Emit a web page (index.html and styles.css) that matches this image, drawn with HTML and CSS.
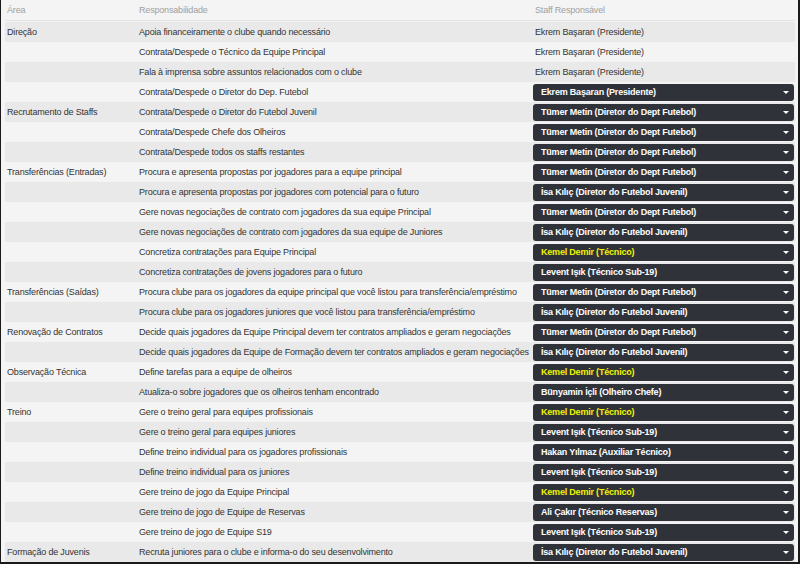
FILE: index.html
```html
<!DOCTYPE html>
<html>
<head>
<meta charset="utf-8">
<link rel="stylesheet" href="styles.css">
</head>
<body>
<div class="frame">
  <div class="table">
    <div class="row head"><div class="c1">Área</div><div class="c2">Responsabilidade</div><div class="c3">Staff Responsável</div></div>
    <div class="row"><div class="c1">Direção</div><div class="c2">Apoia financeiramente o clube quando necessário</div><div class="c3 plain">Ekrem Başaran (Presidente)</div></div>
    <div class="row"><div class="c1"></div><div class="c2">Contrata/Despede o Técnico da Equipe Principal</div><div class="c3 plain">Ekrem Başaran (Presidente)</div></div>
    <div class="row"><div class="c1"></div><div class="c2">Fala à imprensa sobre assuntos relacionados com o clube</div><div class="c3 plain">Ekrem Başaran (Presidente)</div></div>
    <div class="row"><div class="c1"></div><div class="c2">Contrata/Despede o Diretor do Dep. Futebol</div><div class="c3"><div class="sel">Ekrem Başaran (Presidente)</div></div></div>
    <div class="row"><div class="c1">Recrutamento de Staffs</div><div class="c2">Contrata/Despede o Diretor do Futebol Juvenil</div><div class="c3"><div class="sel">Tümer Metin (Diretor do Dept Futebol)</div></div></div>
    <div class="row"><div class="c1"></div><div class="c2">Contrata/Despede Chefe dos Olheiros</div><div class="c3"><div class="sel">Tümer Metin (Diretor do Dept Futebol)</div></div></div>
    <div class="row"><div class="c1"></div><div class="c2">Contrata/Despede todos os staffs restantes</div><div class="c3"><div class="sel">Tümer Metin (Diretor do Dept Futebol)</div></div></div>
    <div class="row"><div class="c1">Transferências (Entradas)</div><div class="c2">Procura e apresenta propostas por jogadores para a equipe principal</div><div class="c3"><div class="sel">Tümer Metin (Diretor do Dept Futebol)</div></div></div>
    <div class="row"><div class="c1"></div><div class="c2">Procura e apresenta propostas por jogadores com potencial para o futuro</div><div class="c3"><div class="sel">İsa Kılıç (Diretor do Futebol Juvenil)</div></div></div>
    <div class="row"><div class="c1"></div><div class="c2">Gere novas negociações de contrato com jogadores da sua equipe Principal</div><div class="c3"><div class="sel">Tümer Metin (Diretor do Dept Futebol)</div></div></div>
    <div class="row"><div class="c1"></div><div class="c2">Gere novas negociações de contrato com jogadores da sua equipe de Juniores</div><div class="c3"><div class="sel">İsa Kılıç (Diretor do Futebol Juvenil)</div></div></div>
    <div class="row"><div class="c1"></div><div class="c2">Concretiza contratações para Equipe Principal</div><div class="c3"><div class="sel hl">Kemel Demir (Técnico)</div></div></div>
    <div class="row"><div class="c1"></div><div class="c2">Concretiza contratações de jovens jogadores para o futuro</div><div class="c3"><div class="sel">Levent Işık (Técnico Sub-19)</div></div></div>
    <div class="row"><div class="c1">Transferências (Saídas)</div><div class="c2">Procura clube para os jogadores da equipe principal que você listou para transferência/empréstimo</div><div class="c3"><div class="sel">Tümer Metin (Diretor do Dept Futebol)</div></div></div>
    <div class="row"><div class="c1"></div><div class="c2">Procura clube para os jogadores juniores que você listou para transferência/empréstimo</div><div class="c3"><div class="sel">İsa Kılıç (Diretor do Futebol Juvenil)</div></div></div>
    <div class="row"><div class="c1">Renovação de Contratos</div><div class="c2">Decide quais jogadores da Equipe Principal devem ter contratos ampliados e geram negociações</div><div class="c3"><div class="sel">Tümer Metin (Diretor do Dept Futebol)</div></div></div>
    <div class="row"><div class="c1"></div><div class="c2">Decide quais jogadores da Equipe de Formação devem ter contratos ampliados e geram negociações</div><div class="c3"><div class="sel">İsa Kılıç (Diretor do Futebol Juvenil)</div></div></div>
    <div class="row"><div class="c1">Observação Técnica</div><div class="c2">Define tarefas para a equipe de olheiros</div><div class="c3"><div class="sel hl">Kemel Demir (Técnico)</div></div></div>
    <div class="row"><div class="c1"></div><div class="c2">Atualiza-o sobre jogadores que os olheiros tenham encontrado</div><div class="c3"><div class="sel">Bünyamin İçli (Olheiro Chefe)</div></div></div>
    <div class="row"><div class="c1">Treino</div><div class="c2">Gere o treino geral para equipes profissionais</div><div class="c3"><div class="sel hl">Kemel Demir (Técnico)</div></div></div>
    <div class="row"><div class="c1"></div><div class="c2">Gere o treino geral para equipes juniores</div><div class="c3"><div class="sel">Levent Işık (Técnico Sub-19)</div></div></div>
    <div class="row"><div class="c1"></div><div class="c2">Define treino individual para os jogadores profissionais</div><div class="c3"><div class="sel">Hakan Yılmaz (Auxiliar Técnico)</div></div></div>
    <div class="row"><div class="c1"></div><div class="c2">Define treino individual para os juniores</div><div class="c3"><div class="sel">Levent Işık (Técnico Sub-19)</div></div></div>
    <div class="row"><div class="c1"></div><div class="c2">Gere treino de jogo da Equipe Principal</div><div class="c3"><div class="sel hl">Kemel Demir (Técnico)</div></div></div>
    <div class="row"><div class="c1"></div><div class="c2">Gere treino de jogo de Equipe de Reservas</div><div class="c3"><div class="sel">Ali Çakır (Técnico Reservas)</div></div></div>
    <div class="row"><div class="c1"></div><div class="c2">Gere treino de jogo de Equipe S19</div><div class="c3"><div class="sel">Levent Işık (Técnico Sub-19)</div></div></div>
    <div class="row"><div class="c1">Formação de Juvenis</div><div class="c2">Recruta juniores para o clube e informa-o do seu desenvolvimento</div><div class="c3"><div class="sel">İsa Kılıç (Diretor do Futebol Juvenil)</div></div></div>
  </div>
</div>
</body>
</html>
```
FILE: styles.css
```css
html, body {
  margin: 0;
  padding: 0;
}
body {
  font-family: "Liberation Sans", Arial, sans-serif;
  font-size: 9px;
  letter-spacing: -0.18px;
  color: #333;
}
.frame {
  width: 800px;
  height: 564px;
  box-sizing: border-box;
  background: #f4f4f4;
  border-left: 1px solid #1a1a1a;
  border-right: 2px solid #1a1a1a;
  border-bottom: 2px solid #1a1a1a;
  padding-left: 4px;
  overflow: hidden;
}
.table {
  width: 790px;
}
.row {
  display: grid;
  grid-template-columns: 132px 396px 262px;
  height: 20px;
  align-items: center;
  white-space: nowrap;
}
.row.head {
  color: #a0a0a0;
  border-bottom: 1px solid #e2e2e2;
  margin-bottom: 1px;
}
.row:nth-child(even) {
  background: #e9e9e9;
}
.c1, .c2 {
  padding-left: 2px;
  overflow: hidden;
}
.c3 {
  padding-left: 2px;
}
.c3:has(.sel) {
  padding-left: 0;
}
.sel {
  position: relative;
  height: 17px;
  width: 261px;
  box-sizing: border-box;
  background: #30323a;
  border-radius: 3px;
  color: #fff;
  font-weight: bold;
  letter-spacing: -0.2px;
  line-height: 17px;
  padding-left: 8px;
}
.sel::after {
  content: "";
  position: absolute;
  right: 5px;
  top: 7px;
  border-left: 3px solid transparent;
  border-right: 3px solid transparent;
  border-top: 3px solid #fff;
}
.sel.hl {
  color: #f2f200;
}
```
